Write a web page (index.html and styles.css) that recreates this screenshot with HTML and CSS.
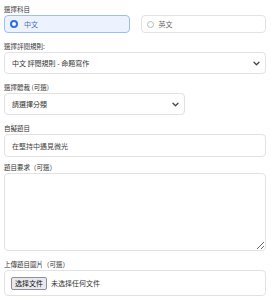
FILE: index.html
```html
<!DOCTYPE html>
<html lang="zh-Hant">
<head>
<meta charset="utf-8">
<link rel="stylesheet" href="styles.css">
</head>
<body>
<form class="form">
  <div class="group">
    <div class="label">選擇科目</div>
    <div class="radios">
      <div class="radio-card selected"><span class="dot"></span><span class="radio-text">中文</span></div>
      <div class="radio-card"><span class="dot"></span><span class="radio-text">英文</span></div>
    </div>
  </div>
  <div class="group">
    <div class="label">選擇評閱規則:</div>
    <div class="select">
      <span>中文 評閱規則 - 命題寫作</span>
      <svg class="chev" width="7" height="5" viewBox="0 0 7 5"><path d="M1 1.2 L3.5 3.7 L6 1.2" fill="none" stroke="#444" stroke-width="1.3" stroke-linecap="round" stroke-linejoin="round"/></svg>
    </div>
  </div>
  <div class="group">
    <div class="label">選擇體裁 (可選)</div>
    <div class="select narrow">
      <span>請選擇分類</span>
      <svg class="chev" width="7" height="5" viewBox="0 0 7 5"><path d="M1 1.2 L3.5 3.7 L6 1.2" fill="none" stroke="#444" stroke-width="1.3" stroke-linecap="round" stroke-linejoin="round"/></svg>
    </div>
  </div>
  <div class="group tight">
    <div class="label">自擬題目</div>
    <div class="input">在堅持中遇見微光</div>
  </div>
  <div class="group">
    <div class="label">題目要求（可選）</div>
    <textarea class="textarea"></textarea>
  </div>
  <div class="group">
    <div class="label">上傳題目圖片（可選）</div>
    <div class="file">
      <span class="file-btn">选择文件</span>
      <span class="file-text">未选择任何文件</span>
    </div>
  </div>
</form>
</body>
</html>
```
FILE: styles.css
```css
html, body {
  margin: 0;
  padding: 0;
  background: #ffffff;
}
body {
  font-family: "Noto Sans CJK TC", "Noto Sans", sans-serif;
  color: #333;
}
.form {
  padding: 5px 5px 0 4px;
}
.group {
  margin-bottom: 9px;
}
.group.tight {
  margin-bottom: 6px;
}
.label {
  font-size: 6.5px;
  line-height: 9px;
  height: 9px;
  margin-bottom: 1px;
  color: #333;
}
.radios {
  display: grid;
  grid-template-columns: 1fr 1fr;
  gap: 11px;
}
.radio-card {
  box-sizing: border-box;
  height: 18px;
  border: 1px solid #e3e3e3;
  border-radius: 4px;
  display: flex;
  align-items: center;
  padding: 0 5px;
  background: #fff;
}
.radio-card .dot {
  box-sizing: border-box;
  width: 7px;
  height: 7px;
  border-radius: 50%;
  border: 1px solid #b8b8b8;
  background: #fff;
  margin-right: 5px;
}
.radio-card.selected {
  background: #edf3fe;
  border-color: #9fbcf3;
}
.radio-card.selected .dot {
  width: 8px;
  height: 8px;
  border: 2.5px solid #2f6fe4;
  margin-right: 6px;
}
.radio-text {
  font-size: 7px;
  line-height: 9px;
  color: #666;
}
.radio-card.selected .radio-text {
  color: #4a6fb8;
}
.select {
  box-sizing: border-box;
  height: 22px;
  border: 1px solid #e2e2e2;
  border-radius: 4px;
  display: flex;
  align-items: center;
  justify-content: space-between;
  padding: 0 5px 0 7px;
  font-size: 7px;
  color: #333;
  background: #fff;
}
.select.narrow {
  width: 181px;
}
.chev {
  display: block;
}
.input {
  box-sizing: border-box;
  height: 23px;
  border: 1px solid #e2e2e2;
  border-radius: 4px;
  display: flex;
  align-items: center;
  padding: 0 7px;
  font-size: 7px;
  color: #444;
}
.textarea {
  display: block;
  box-sizing: border-box;
  width: 100%;
  height: 78px;
  margin: 0;
  border: 1px solid #e2e2e2;
  border-radius: 4px;
  resize: vertical;
  outline: none;
  background: #fff;
}
.file {
  box-sizing: border-box;
  height: 26px;
  border: 1px solid #e2e2e2;
  border-radius: 4px;
  display: flex;
  align-items: center;
  padding: 0 6px;
  font-size: 7px;
}
.file-btn {
  box-sizing: border-box;
  height: 13px;
  display: flex;
  align-items: center;
  padding: 0 3px;
  background: #e9e9ed;
  border: 1px solid #8f8f9d;
  border-radius: 2px;
  color: #111;
  margin-right: 4px;
}
.file-text {
  color: #333;
}
```
